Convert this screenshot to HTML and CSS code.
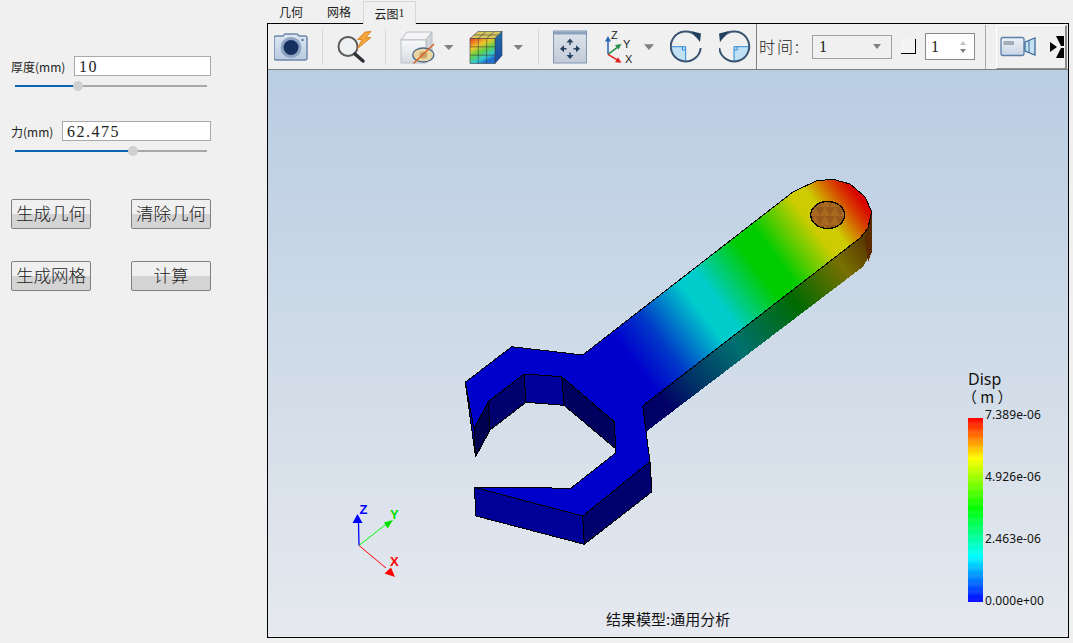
FILE: index.html
```html
<!DOCTYPE html>
<html lang="zh">
<head>
<meta charset="utf-8">
<title>云图</title>
<link rel="stylesheet" href="styles.css">
</head>
<body>
<div class="app">
  <aside class="side">
    <div class="field">
      <div class="field-row"><label class="field-label">厚度(mm)</label><input class="field-input input-short" value="10"></div>
      <div class="slider"><div class="slider-fill" style="width:63px"><span class="slider-thumb"></span></div></div>
    </div>
    <div class="field">
      <div class="field-row"><label class="field-label">力(mm)</label><input class="field-input input-long" value="62.475"></div>
      <div class="slider"><div class="slider-fill" style="width:118px"><span class="slider-thumb"></span></div></div>
    </div>
    <div class="actions">
      <button class="btn">生成几何</button>
      <button class="btn">清除几何</button>
      <button class="btn">生成网格</button>
      <button class="btn">计算</button>
    </div>
  </aside>
  <main class="work">
    <nav class="tabs">
      <span class="tab">几何</span>
      <span class="tab">网格</span>
      <span class="tab tab-active">云图<small class="tab-num">1</small></span>
    </nav>
    <section class="frame">
      <div class="toolbar">
        <div class="group g-camera">
          <svg class="icon" width="34" height="40" viewBox="274 27 34 40">
            <defs>
              <linearGradient id="bodyG" x1="0" y1="0" x2="0" y2="1"><stop offset="0" stop-color="#dfe8f3"/><stop offset="1" stop-color="#b9cbe0"/></linearGradient>
            </defs>
            <path d="M276 36h7l2-2h12l2 2h6a2 2 0 0 1 2 2v20a2 2 0 0 1-2 2h-29a2 2 0 0 1-2-2v-20a2 2 0 0 1 2-2z" fill="url(#bodyG)" stroke="#6c87ab" stroke-width="1.5"/>
            <circle cx="291" cy="47.5" r="10.5" fill="#8ea4c2"/>
            <circle cx="291" cy="47.5" r="7.5" fill="#16305f"/>
            <circle cx="302.500" cy="40" r="1.300" fill="#5f7ea8"/>
          </svg>
        </div>
        <span class="sep"></span>
        <div class="group g-search">
          <svg class="icon" width="36" height="40" viewBox="337 27 36 40">
            <circle cx="348" cy="46.500" r="9.500" fill="#eef0f2" stroke="#5a5a5a" stroke-width="2"/>
            <path d="M355 54l8 7" stroke="#2f3338" stroke-width="3.500" stroke-linecap="round"/>
            <path d="M365 32l-7.500 7.500h4.500l-5 9.500 14-11.500h-5l5-6z" fill="#f4a63c" stroke="#d07a18" stroke-width=".8"/>
          </svg>
        </div>
        <span class="sep"></span>
        <div class="group g-view">
          <svg class="icon" width="55" height="40" viewBox="400 27 55 40">
            <defs>
              <linearGradient id="boxG" x1="0" y1="0" x2="0" y2="1"><stop offset="0" stop-color="#fafafa"/><stop offset="1" stop-color="#d6dade"/></linearGradient>
            </defs>
            <path d="M401 40l6-8h25l-6 8z" fill="#f4f4f4" stroke="#b8bec6"/>
            <path d="M426 40l6-8v23l-6 8z" fill="#cfd4da" stroke="#b8bec6"/>
            <rect x="401" y="40" width="25" height="23" fill="url(#boxG)" stroke="#b8bec6"/>
            <ellipse cx="423.300" cy="55" rx="10.500" ry="7" fill="#e9d6a2" stroke="#4f6a8d" stroke-width="1.300"/>
            <ellipse cx="423.300" cy="55" rx="4" ry="3.500" fill="#c9a868"/>
            <path d="M413.500 63.500L434 44" stroke="#d8622a" stroke-width="1.500"/>
            <path d="M444 45h9.500l-4.700 5z" fill="#808080"/>
          </svg>
          <svg class="icon" width="55" height="40" viewBox="469 27 55 40">
            <defs>
              <linearGradient id="cubeF" x1="0" y1="0" x2=".5" y2="1"><stop offset="0" stop-color="#e83a20"/><stop offset=".35" stop-color="#f0c828"/><stop offset=".6" stop-color="#5fd048"/><stop offset=".85" stop-color="#30c8d8"/><stop offset="1" stop-color="#2070d0"/></linearGradient>
              <linearGradient id="cubeR" x1="0" y1="0" x2="0" y2="1"><stop offset="0" stop-color="#1f6fa0"/><stop offset="1" stop-color="#1848a8"/></linearGradient>
            </defs>
            <path d="M470 38.500l8-7h24l-7 7z" fill="#d8c860" stroke="#404040" stroke-width=".6"/>
            <path d="M478 38.500l8-7M486.500 38.500l8-7M474 35h24" stroke="#404040" stroke-width=".6"/>
            <path d="M495 38.500l7-7v24l-7 8z" fill="url(#cubeR)" stroke="#304060" stroke-width=".6"/>
            <rect x="470" y="38.500" width="25" height="25" fill="url(#cubeF)" stroke="#404040" stroke-width=".6"/>
            <path d="M478.300 38.500v25M486.700 38.500v25M470 46.800h25M470 55.200h25" stroke="#404040" stroke-width=".6"/>
            <path d="M513.500 45h9.500l-4.700 5z" fill="#808080"/>
          </svg>
        </div>
        <span class="sep"></span>
        <div class="group g-camera-tools">
          <svg class="icon" width="34" height="40" viewBox="553 27 34 40">
            <defs>
              <linearGradient id="fitG" x1="0" y1="0" x2="0" y2="1"><stop offset="0" stop-color="#dfe4ec"/><stop offset="1" stop-color="#c2cad8"/></linearGradient>
            </defs>
            <rect x="553.500" y="31" width="33" height="32" fill="url(#fitG)" stroke="#8097b4"/>
            <rect x="554" y="31.500" width="32" height="3" fill="#8ca2bd"/>
            <path d="M570 38.500l-3.500 4h7zM570 59l-3.500-4h7zM560 48.700l4-3.500v7zM580 48.700l-4-3.500v7z" fill="#23405f"/>
            <path d="M570 42v3M570 52.500v3M563.500 48.700h3M573.500 48.700h3" stroke="#23405f" stroke-width="1.400"/>
          </svg>
          <svg class="icon" width="50" height="40" viewBox="606 27 50 40">
            <path d="M609 54.300V39" stroke="#2a62b0" stroke-width="1.500"/>
            <path d="M609 36l-3 5.500h6z" fill="#2a62b0"/>
            <path d="M609 54.300l10-7.500" stroke="#249048" stroke-width="1.500"/>
            <path d="M622.500 44l-6.500 1 3.500 4.500z" fill="#249048"/>
            <path d="M609 54.300l10 6" stroke="#e02020" stroke-width="1.500"/>
            <path d="M622.500 62.700l-6.500-.5 3-5z" fill="#e02020"/>
            <text class="axis-mini" x="612" y="38.500">Z</text>
            <text class="axis-mini" x="624" y="47.500">Y</text>
            <text class="axis-mini" x="626" y="62.500">X</text>
            <path d="M645 44.300h10l-5 5.700z" fill="#808080"/>
          </svg>
          <svg class="icon" width="32" height="40" viewBox="671 27 32 40">
            <path d="M671.500 47h15.200v15a15 15 0 0 1-15.200-15z" fill="#bfe0f5"/>
            <path d="M672 46.700h14.700V61M683.500 46.700v3.300h3.200" fill="none" stroke="#2a8ad8" stroke-width="1"/>
            <path d="M698 36.500A15 15 0 1 0 701.700 48" fill="none" stroke="#3a5472" stroke-width="2"/>
            <path d="M692 31l10 2.500-1 8.500z" fill="#23405f"/>
          </svg>
          <svg class="icon" width="32" height="40" viewBox="720 27 32 40">
            <path d="M750.500 47h-15.500v15a15 15 0 0 0 15.500-15z" fill="#bfe0f5"/>
            <path d="M750 46.700h-15V61M738.200 46.700v3.300h-3.200" fill="none" stroke="#2a8ad8" stroke-width="1"/>
            <path d="M724 36.500A15 15 0 1 1 720.300 48" fill="none" stroke="#3a5472" stroke-width="2"/>
            <path d="M730 31l-10 2.500 1 8.500z" fill="#23405f"/>
          </svg>
        </div>
        <div class="time-group">
          <span class="time-label">时间:</span>
          <div class="combo"><span class="value">1</span><span class="combo-arrow"></span></div>
          <span class="check"></span>
          <div class="spin"><span class="value">1</span><span class="spin-arrows"><i class="spin-up"></i><i class="spin-down"></i></span></div>
        </div>
        <span class="sep sep-tall"></span>
        <div class="raised">
          <svg class="icon" width="36" height="24" viewBox="1000 37 36 24">
            <defs>
              <linearGradient id="vidG" x1="0" y1="0" x2="0" y2="1"><stop offset="0" stop-color="#eef2f7"/><stop offset="1" stop-color="#c8d4e4"/></linearGradient>
            </defs>
            <rect x="1001" y="39.500" width="23" height="18" rx="2" fill="url(#vidG)" stroke="#5c7da8" stroke-width="1.300"/>
            <rect x="1003.500" y="43" width="10.500" height="4" fill="#a4acb8"/>
            <path d="M1025 44l10-4v17l-10-4z" fill="#c4e2f2" stroke="#3f6a9a" stroke-width="1.300"/>
            <path d="M1029 42v13" stroke="#3f6a9a"/>
          </svg>
          <svg class="icon chevron" width="14" height="22" viewBox="0 0 14 22">
            <defs>
              <filter id="soft" x="-20%" y="-20%" width="140%" height="140%"><feGaussianBlur stdDeviation=".6"/></filter>
            </defs>
            <g filter="url(#soft)" fill="#000">
              <path d="M0 6l7 5-7 5z"/>
              <path d="M6 0h8v10h-3z"/>
              <path d="M6 22h8V12h-3z"/>
            </g>
          </svg>
        </div>
      </div>
      <div class="viewport">
        <svg class="scene" width="800" height="566" viewBox="268 70 800 566">
          <defs>
            <linearGradient id="topG" gradientUnits="userSpaceOnUse" x1="640" y1="370" x2="864" y2="202">
              <stop offset="0" stop-color="#0000cc"/>
              <stop offset=".12" stop-color="#0038c8"/>
              <stop offset=".3" stop-color="#00cccc"/>
              <stop offset=".37" stop-color="#00cccc"/>
              <stop offset=".55" stop-color="#00cc00"/>
              <stop offset=".63" stop-color="#00cc00"/>
              <stop offset=".8" stop-color="#cccc00"/>
              <stop offset=".86" stop-color="#cccc00"/>
              <stop offset=".95" stop-color="#d84000"/>
              <stop offset="1" stop-color="#d80000"/>
            </linearGradient>
            <linearGradient id="sideG" gradientUnits="userSpaceOnUse" x1="640" y1="370" x2="864" y2="202">
              <stop offset="0" stop-color="#000066"/>
              <stop offset=".12" stop-color="#003066"/>
              <stop offset=".33" stop-color="#007070"/>
              <stop offset=".59" stop-color="#006a00"/>
              <stop offset=".8" stop-color="#787000"/>
              <stop offset=".92" stop-color="#5a3a00"/>
              <stop offset="1" stop-color="#4a2400"/>
            </linearGradient>
            <pattern id="holeP" patternUnits="userSpaceOnUse" width="10" height="9">
              <rect width="10" height="9" fill="#95591a"/>
              <path d="M5 0l5 9H0z" fill="#a8681f"/>
            </pattern>
          </defs>
          <g class="mesh" stroke="#000" stroke-width="1" stroke-linejoin="round">
            <path d="M642.700 406L860 238L868 228L871.700 211.700L872.500 250L863 266.700L646 431.700Z" fill="url(#sideG)" stroke="none"/>
            <path d="M871.700 211.700L872.500 250L868 262L865 240Z" fill="#5a2c00" stroke="none"/>
            <path d="M582.700 516L650 461.700L652 491.700L584.300 544.300Z" fill="#00006e"/>
            <path d="M474.300 487.300L582.700 516L584.300 544.300L476 516Z" fill="#000098"/>
            <path d="M465.300 382.300L474 429L475.500 457Z" fill="#0000b4"/>
            <path d="M488.300 401.700L474 429L475.500 457L490 430Z" fill="#000050"/>
            <path d="M524 374L526 402.300L490 430L488.300 401.700Z" fill="#00006e"/>
            <path d="M524 374L561.700 376.700L564 405.300L526 402.300Z" fill="#00009a"/>
            <path d="M561.700 376.700L614.300 421.700L616 449L564 405.300Z" fill="#00005e"/>
            <path d="M465.300 382.300L511.700 346.700L582.700 355L620 326L793.300 191.700L816.700 180.700L833.300 179.300L850 184L865 196.700L871.700 211.700L868 228L860 238L642.700 406L650 461.700L582.700 516L474.300 487.300L532.700 487.700L570.700 488.300L616 452.700L614.300 421.700L561.700 376.700L524 374L488.300 401.700L474 429Z" fill="url(#topG)"/>
            <ellipse cx="827.700" cy="215" rx="17" ry="13.500" fill="url(#holeP)" stroke-width="1.300"/>
          </g>
          <g class="triad">
            <path d="M359 545.500L358.500 522" stroke="#0000ff" stroke-width="1.300"/>
            <path d="M357.500 514l-5 9h10z" fill="#0000ff"/>
            <path d="M359 545.500L385 525" stroke="#00ff00" stroke-width="1"/>
            <path d="M393 520l-9 2.500 3.500 6z" fill="#00e000"/>
            <path d="M359 545.500L386 568" stroke="#ff0000" stroke-width="1"/>
            <path d="M395 577l-4-9.500-6.500 6z" fill="#ff0000"/>
            <text class="triad-label triad-z" x="359.500" y="514">Z</text>
            <text class="triad-label triad-y" x="390" y="519">Y</text>
            <text class="triad-label triad-x" x="390" y="566">X</text>
          </g>
        </svg>
        <div class="legend">
          <div class="legend-title">Disp</div>
          <div class="legend-unit">（ m ）</div>
          <div class="legend-body">
            <div class="legend-bar"></div>
            <div class="legend-ticks">
              <span>7.389e-06</span>
              <span>4.926e-06</span>
              <span>2.463e-06</span>
              <span>0.000e+00</span>
            </div>
          </div>
        </div>
        <div class="caption">结果模型:通用分析</div>
      </div>
    </section>
  </main>
</div>
</body>
</html>
```
FILE: styles.css
```css
* { box-sizing: border-box; }
html, body { margin: 0; padding: 0; }
body {
  width: 1073px;
  height: 643px;
  overflow: hidden;
  background: #f0f0f0;
  color: #222;
  font-family: "Noto Sans CJK SC", "Liberation Sans", sans-serif;
}
.app { display: flex; height: 643px; }

/* left panel */
.side { width: 267px; padding: 56px 56px 0 11px; flex: none; }
.field { height: 65px; }
.field-row { display: flex; align-items: center; justify-content: space-between; height: 20px; }
.field-label { font-size: 12px; white-space: nowrap; color: #222; }
.field-input {
  height: 20px;
  padding: 1px 4px 0;
  border: 1px solid #a9a9a9;
  background: #fff;
  outline: none;
  font-family: "Liberation Serif", serif;
  font-size: 16px;
  letter-spacing: 1.5px;
  color: #222;
}
.input-short { width: 137px; }
.input-long { width: 149px; }
.slider { position: relative; height: 2px; margin: 9px 4px 0; background: #a8a8a8; }
.slider-fill { position: relative; height: 2px; background: #0a64b4; }
.slider-thumb {
  position: absolute;
  right: -5px;
  top: -4px;
  width: 10px;
  height: 10px;
  border-radius: 50%;
  background: #d0d0d0;
}
.actions {
  display: grid;
  grid-template-columns: 80px 80px;
  column-gap: 40px;
  row-gap: 32px;
  margin-top: 13px;
}
.btn {
  height: 30px;
  padding: 0 0 2px;
  border: 1px solid #808080;
  border-radius: 2px;
  background: linear-gradient(to bottom, #f0f0f0 0 50%, #d4d4d4 50% 100%);
  font-family: "Noto Sans CJK SC", sans-serif;
  font-size: 17.5px;
  font-weight: 300;
  line-height: 1;
  color: #222;
}

/* tabs */
.work { flex: none; width: 802px; height: 638px; display: flex; flex-direction: column; }
.tabs { display: flex; height: 23px; flex: none; }
.tab {
  display: flex;
  align-items: center;
  justify-content: center;
  width: 48px;
  height: 23px;
  font-size: 12px;
  color: #222;
}
.tab-active {
  position: relative;
  z-index: 1;
  width: 53px;
  height: 23px;
  margin-top: 1px;
  border: 1px solid #d9d9d9;
  border-bottom: 0;
  background: #f0f0f0;
}
.tab-num { font-family: "Liberation Serif", serif; font-size: 12px; }

/* frame */
.frame { flex: 1; display: flex; flex-direction: column; border: 1px solid #000; min-height: 0; }
.toolbar {
  display: flex;
  align-items: center;
  flex: none;
  height: 46px;
  padding-top: 1px;
  border-bottom: 1px solid #808080;
  background: #f0f0f0;
}
.icon { display: block; flex: none; }
.group { display: flex; align-items: center; height: 100%; }
.g-camera { width: 54px; padding-left: 6px; }
.g-search { width: 62px; padding-left: 14px; }
.g-view { width: 152px; padding-left: 14px; gap: 14px; }
.g-camera-tools { width: 217px; padding-left: 14px; gap: 18px; }
.g-camera-tools .icon:nth-child(3) { margin-left: -3px; }
.g-camera-tools .icon:nth-child(4) { margin-left: -1px; }
.sep { width: 1px; height: 36px; flex: none; background: #d8d8d8; }
.sep-tall { height: 44px; margin-left: 10px; margin-top: -1px; background: #a8a8a8; }
.axis-mini { font-family: "Liberation Sans", sans-serif; font-size: 11px; fill: #222; }

.time-group {
  display: flex;
  align-items: center;
  height: 45px;
  margin-top: -1px;
  padding-left: 2px;
  border-left: 1px solid #808080;
}
.time-label {
  width: 53px;
  padding-bottom: 2px;
  font-size: 16px;
  font-weight: 300;
  color: #222;
  letter-spacing: 2px;
}
.value { font-family: "Liberation Serif", serif; font-size: 16px; color: #222; }
.combo {
  display: flex;
  align-items: center;
  justify-content: space-between;
  width: 80px;
  height: 24px;
  padding: 0 10px 0 6px;
  border: 1px solid #a0a0a0;
  background: #f0f0f0;
}
.combo-arrow {
  width: 0;
  height: 0;
  border-left: 4.5px solid transparent;
  border-right: 4.5px solid transparent;
  border-top: 5px solid #808080;
}
.check {
  width: 15px;
  height: 15px;
  margin: 0 9px;
  background: #f4f4f4;
  border-right: 1px solid #000;
  border-bottom: 1px solid #000;
}
.spin {
  display: flex;
  align-items: center;
  justify-content: space-between;
  width: 50px;
  height: 27px;
  padding: 0 8px 0 5px;
  border: 1px solid #8a8a8a;
  background: #fff;
}
.spin-arrows { display: flex; flex-direction: column; gap: 4px; }
.spin-up, .spin-down {
  display: block;
  width: 0;
  height: 0;
  border-left: 3.5px solid transparent;
  border-right: 3.5px solid transparent;
}
.spin-up { border-bottom: 4px solid #c4c4c4; }
.spin-down { border-top: 4px solid #808080; }
.raised {
  display: flex;
  align-items: center;
  width: 71px;
  height: 44px;
  margin-left: 10px;
  margin-top: 0;
  padding-left: 3px;
  border-top: 1px solid #fff;
  border-left: 1px solid #fff;
  border-right: 2px solid #8a8a8a;
  border-bottom: 1px solid #8a8a8a;
}
.chevron { margin-left: 14px; }

/* viewport */
.viewport {
  position: relative;
  flex: 1;
  min-height: 0;
  background: linear-gradient(to bottom, #b9cde3 0%, #d4dee9 60%, #e6e9ef 100%);
  overflow: hidden;
}
.scene { display: block; }
.mesh { shape-rendering: crispEdges; }
.triad-label { font-family: "Liberation Sans", sans-serif; font-size: 13px; font-weight: 700; }
.triad-z { fill: #0000ff; }
.triad-y { fill: #00e000; }
.triad-x { fill: #ff0000; }

.legend { position: absolute; left: 700px; top: 300px; width: 96px; }
.legend-title { font-family: "Noto Sans", sans-serif; font-size: 16px; line-height: 18px; color: #111; }
.legend-unit { font-family: "Noto Sans CJK SC", sans-serif; font-size: 15px; line-height: 18px; height: 18px; color: #111; margin-left: -6px; }
.legend-body { display: flex; margin-top: 12px; }
.legend-bar {
  width: 15px;
  height: 184px;
  flex: none;
  background:
    repeating-linear-gradient(to bottom, rgba(255,255,255,0) 0 4px, rgba(255,255,255,.05) 4px 8px),
    linear-gradient(to bottom, #ff0000 0%, #ffff00 22%, #00ff00 49%, #00ffff 75%, #0000ff 100%);
}
.legend-ticks {
  display: flex;
  flex-direction: column;
  justify-content: space-between;
  height: 198px;
  margin: -9px 0 0 2px;
  font-family: "Noto Sans", sans-serif;
  font-size: 12px;
  letter-spacing: .1px;
  line-height: 12px;
  color: #111;
}
.caption {
  position: absolute;
  left: 338px;
  top: 540px;
  font-size: 15px;
  line-height: 18px;
  color: #111;
  white-space: nowrap;
}
```
